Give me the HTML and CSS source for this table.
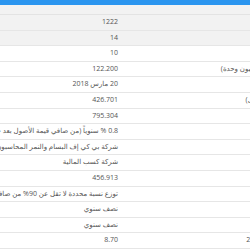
FILE: index.html
```html
<!DOCTYPE html>
<html lang="ar">
<head>
<meta charset="utf-8">
<link rel="stylesheet" href="styles.css">
</head>
<body>
<div class="frame">
  <div class="topbar"></div>
  <div class="lead-row"></div>
  <table class="facts" dir="rtl">
    <colgroup><col class="c-label"><col class="c-value"></colgroup>
    <tbody>
      <tr class="shade"><th>رقم الصندوق</th><td>1222</td></tr>
      <tr class="shade"><th>عدد المشتركين</th><td>14</td></tr>
      <tr><th>سعر الطرح</th><td>10</td></tr>
      <tr><th>كل الوحدات المصدرة (مليون وحدة)</th><td>122.200</td></tr>
      <tr><th>تاريخ الإدراج</th><td>20 مارس 2018</td></tr>
      <tr><th>إجمالي قيمة الأصول (ريال)</th><td>426.701</td></tr>
      <tr><th>قيمة الوحدات</th><td>795.304</td></tr>
      <tr><th>رسوم الإدارة</th><td>0.8 % سنوياً (من صافي قيمة الأصول بعد خصم المصاريف)</td></tr>
      <tr><th>المحاسب القانوني</th><td>شركة بي كي إف البسام والنمر المحاسبون المتحالفون</td></tr>
      <tr><th>مدير الصندوق</th><td>شركة كسب المالية</td></tr>
      <tr><th>صافي الأصول</th><td>456.913</td></tr>
      <tr><th>سياسة التوزيع</th><td>توزع نسبة محددة لا تقل عن 90% من صافي الأرباح</td></tr>
      <tr><th>دورية التوزيع</th><td>نصف سنوي</td></tr>
      <tr><th>دورية التقييم</th><td>نصف سنوي</td></tr>
      <tr><th>سعر الإغلاق للوحدة، 2018</th><td>8.70</td></tr>
    </tbody>
  </table>
</div>
</body>
</html>
```
FILE: styles.css
```css
html, body {
  margin: 0;
  padding: 0;
  background: #ffffff;
}
.frame {
  width: 250px;
  height: 250px;
  overflow: hidden;
  font-family: "Open Sans", "DejaVu Sans", sans-serif;
  font-size: 7px;
  color: #555555;
}
.topbar {
  height: 5px;
  background: #2b95ef;
}
.lead-row {
  width: 330px;
  height: 8.5px;
  background: #f2f2f2;
  border-bottom: 1px solid #e3e3e3;
}
.facts {
  table-layout: fixed;
  width: 330px;
  border-collapse: collapse;
  border-spacing: 0;
}
.c-value { width: 125px; }
.c-label { width: 205px; }
.facts tr {
  height: 15.6px;
}
.facts th,
.facts td {
  padding: 0 7px 0 0;
  height: 14.6px;
  border-bottom: 1px solid #e6e6e6;
  white-space: nowrap;
  text-align: right;
  font-weight: normal;
  line-height: 14.6px;
  vertical-align: middle;
}
.facts th {
  padding-right: 8px;
}
.facts tr.shade th,
.facts tr.shade td {
  background: #f2f2f2;
}
```
